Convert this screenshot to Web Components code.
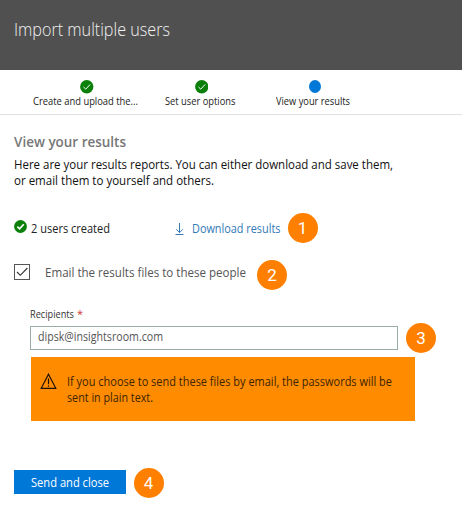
<!DOCTYPE html>
<html lang="en"><head><meta charset="utf-8"><title>Import multiple users</title>
<style>
body{margin:0;background:#fff;font-family:"Open Sans","Noto Sans",sans-serif}
</style></head><body>
<import-page></import-page>
<script>
const define=(name,html,after)=>customElements.define(name,class extends HTMLElement{
  connectedCallback(){
    if(this.shadowRoot)return;
    const t=document.createElement('template');t.innerHTML=html;
    this.attachShadow({mode:'open'}).append(t.content.cloneNode(true));
    if(after)after(this);
  }
});
// One line of text, condensed so that it fills the width in its "w" attribute.
define('text-line',`<style>:host{display:block;white-space:nowrap;flex:none}span{display:inline-block;vertical-align:top;transform-origin:0 50%}</style><span><slot></slot></span>`,el=>{
  const w=+el.getAttribute('w'),s=el.shadowRoot.querySelector('span');
  el.style.width=w+'px';
  s.style.transform='scaleX('+w/s.getBoundingClientRect().width+')';
});
define('number-badge',`<style>:host{display:flex;flex:none;width:30px;height:30px;border-radius:50%;background:#ff7f00;color:#fff;font:400 17px/30px Roboto,sans-serif;justify-content:center;align-items:center}</style><slot></slot>`);
define('check-dot',`<style>:host{display:block;flex:none;width:13px;height:13px}svg{display:block;width:100%;height:100%}path{stroke:#fff;fill:none;stroke-width:var(--tick,1)}</style>
<svg viewBox="0 0 14 14"><circle cx="7" cy="7" r="6.9" fill="#0a800a"/><path d="M3.6 7.2 6 9.5 10.5 4.6"/></svg>`);
define('page-header',`<style>:host{display:block;height:70px;box-sizing:border-box;padding:17px 0 0 14px;background:#505050;color:#f2f2f2;font-size:18px;line-height:24px;font-weight:300}</style><slot></slot>`);
define('step-item',`<style>:host{display:flex;flex-direction:column;align-items:center;font-size:11px;line-height:14px;color:#222}.i{height:14px;padding-left:3px}</style><div class="i"><slot name="icon"></slot></div><slot></slot>`);
define('step-bar',`<style>:host{display:flex;height:45px;box-sizing:border-box;padding:10px 0 0 33px;border-bottom:1px solid #e1e1e1}
step-item+step-item{margin-left:26.5px}step-item:last-child{margin-left:41px}
check-dot{width:13.5px;height:13.5px}.now{width:12px;height:13px;border-radius:50%;background:#0078d7}</style>
<step-item><check-dot slot="icon"></check-dot><text-line w="105">Create and upload the...</text-line></step-item>
<step-item><check-dot slot="icon"></check-dot><text-line w="70.5">Set user options</text-line></step-item>
<step-item><div class="now" slot="icon"></div><text-line w="74">View your results</text-line></step-item>`);
define('result-summary',`<style>:host{display:flex;height:30px;align-items:center;font-size:12.5px;color:#222}
check-dot{--tick:1.8;margin:-4px 4px 0 0}.d{color:#337ab7}svg{flex:none;margin:1px 6px 0 64px}number-badge{margin-left:7px}</style>
<check-dot></check-dot><text-line w="79">2 users created</text-line>
<svg width="12" height="14" viewBox="0 0 12 14" fill="none" stroke="#337ab7"><path d="M5.5 1v9.5M2.2 7.3l3.3 3.3 3.3-3.3M1.5 12.5h8"/></svg>
<text-line class="d" w="88.5">Download results</text-line><number-badge>1</number-badge>`);
define('check-option',`<style>:host{display:flex;align-items:center;height:30px;font-size:12.5px;color:#555}.b{width:16px;height:16px;box-sizing:border-box;border:1px solid #555;margin:-7px 15px 0 0}svg{display:block}text-line{margin-top:-5px}number-badge{margin-left:11px}</style>
<div class="b"><svg width="14" height="14" viewBox="0 0 14 14" fill="none" stroke="#333" stroke-width="1.15"><path d="m2 7 3.3 3.3L12.4 3"/></svg></div><text-line w="201">Email the results files to these people</text-line><number-badge>2</number-badge>`);
define('recipient-field',`<style>:host{display:block}.l{display:flex;font-size:11px;line-height:14px;color:#333}.l b{color:#c33;font-weight:400;margin-left:3px}.r{display:flex;align-items:center;margin-top:2px}.f{width:368px;height:24px;box-sizing:border-box;border:1px solid #9aaca6;padding:0 7px;font-size:12px;line-height:20px;color:#555}number-badge{margin-left:8px}</style>
<div class="l"><text-line w="44">Recipients</text-line><b>*</b></div><div class="r"><div class="f"><text-line w="125">dipsk@insightsroom.com</text-line></div><number-badge>3</number-badge></div>`);
define('warning-box',`<style>:host{display:flex;width:384px;height:64px;box-sizing:border-box;padding:16px 0 0 9px;background:#ff8c00;color:#3c2404;font-size:12.5px;line-height:16px}svg{margin-right:10px;flex:none}div{padding-top:1px}</style>
<svg width="17" height="17" viewBox="0 0 17 17" fill="none" stroke="#1d1205" stroke-width="1.2"><path d="M8.5 1.2 15.8 15.3H1.2Z"/><path d="M8.5 5.5v5.8M8.5 12.4v1.4"/></svg>
<div><text-line w="325">If you choose to send these files by email, the passwords will be</text-line><text-line w="86">sent in plain text.</text-line></div>`);
define('action-button',`<style>button{display:flex;justify-content:center;align-items:center;width:112px;height:24px;border:0;padding:2px 0 0;background:#0078d7;color:#fff;font:12.5px "Open Sans",sans-serif}</style><button><text-line w="78">Send and close</text-line></button>`);
define('import-page',`<style>:host{display:block;width:462px;height:505px;overflow:hidden}
main{padding:17px 0 0 14px}.h{font-size:14px;line-height:20px;font-weight:600;color:#777}.p{font-size:12.5px;line-height:16px;color:#111;margin-top:5px}
result-summary{margin-top:24px}check-option{margin-top:17px}recipient-field{margin:17px 0 0 16px}warning-box{margin:4px 0 0 17px}footer{display:flex;align-items:center;margin-top:47px;gap:7.5px}footer action-button{margin-top:-3px}</style>
<page-header><text-line w="156">Import multiple users</text-line></page-header><step-bar></step-bar>
<main><text-line class="h" w="112">View your results</text-line>
<div class="p"><text-line w="379">Here are your results reports. You can either download and save them,</text-line><text-line w="200">or email them to yourself and others.</text-line></div>
<result-summary></result-summary><check-option></check-option><recipient-field></recipient-field><warning-box></warning-box>
<footer><action-button></action-button><number-badge>4</number-badge></footer></main>`);
</script></body></html>
